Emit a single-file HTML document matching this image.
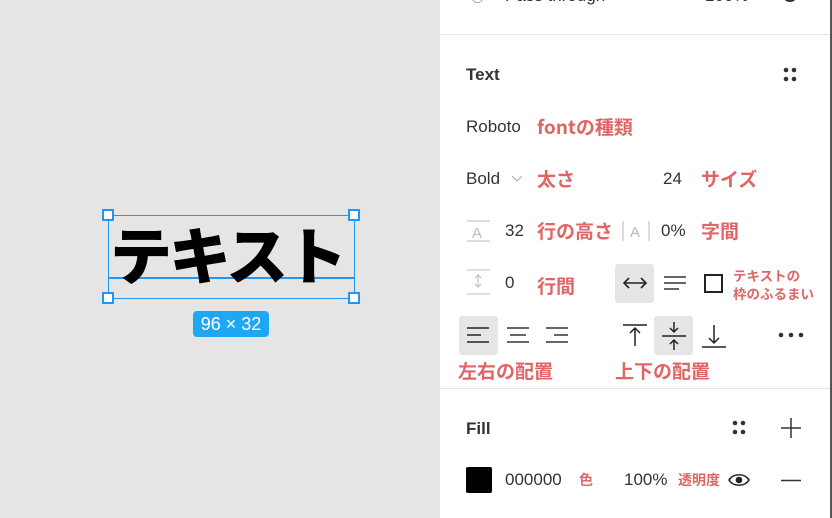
<!DOCTYPE html>
<html><head><meta charset="utf-8"><style>
*{margin:0;padding:0;box-sizing:border-box}
body{width:832px;height:518px;overflow:hidden;background:#e5e5e5;font-family:"Liberation Sans","Noto Sans CJK JP",sans-serif;position:relative}
.a{position:absolute}
.p{left:440px;top:0;width:392px;height:518px;background:#fff}
.t{font-size:17px;color:#333}
.r{color:#e06666;font-weight:bold;font-size:19px;font-family:"Noto Sans CJK JP",sans-serif}
.hl{background:#e6e6e6;border-radius:3px}
.h{position:absolute;width:12px;height:12px;background:#fff;border:2px solid #2196f3}
</style></head><body>
<div class="a p"></div>
<div class="a" style="left:830px;top:0;width:2px;height:518px;background:#555"></div>
<div class="a t" style="left:505px;top:-14px;font-size:17px">Pass through</div>
<div class="a t" style="left:705px;top:-14px">100%</div>
<div class="a" style="left:471px;top:-10px;width:13px;height:13px;border:1.5px solid #aaa;border-radius:50%"></div>
<div class="a" style="left:783px;top:-10px;width:14px;height:12px;border:2px solid #333;border-radius:50%"></div>
<div class="a" style="left:440px;top:34px;width:390px;height:1px;background:#e5e5e5"></div>
<div class="a t" style="left:466px;top:65px;font-weight:bold;font-size:17px">Text</div>
<svg class="a" style="left:782px;top:67px" width="16" height="16"><g fill="#333"><circle cx="4" cy="3" r="2.3"/><circle cx="12" cy="3" r="2.3"/><circle cx="4" cy="12" r="2.3"/><circle cx="12" cy="12" r="2.3"/></g></svg>
<div class="a t" style="left:466px;top:117px">Roboto</div>
<div class="a r" style="left:537px;top:113px">fontの種類</div>
<div class="a t" style="left:466px;top:169px">Bold</div>
<svg class="a" style="left:511px;top:175px" width="12" height="8"><path d="M1 1l5 5 5-5" stroke="#aaa" fill="none"/></svg>
<div class="a r" style="left:537px;top:165px">太さ</div>
<div class="a t" style="left:663px;top:169px">24</div>
<div class="a r" style="left:701px;top:165px">サイズ</div>
<svg class="a" style="left:466px;top:219px" width="24" height="24"><path d="M1 2h23M1 22h23" stroke="#bbb"/><text x="6" y="19" font-size="15" fill="#bbb" font-family="Liberation Sans">A</text></svg>
<div class="a t" style="left:505px;top:221px">32</div>
<div class="a r" style="left:537px;top:217px">行の高さ</div>
<svg class="a" style="left:621px;top:219px" width="30" height="24"><path d="M2 2v20M28 2v20" stroke="#bbb"/><text x="9" y="18" font-size="15" fill="#bbb" font-family="Liberation Sans">A</text></svg>
<div class="a t" style="left:661px;top:221px">0%</div>
<div class="a r" style="left:701px;top:217px">字間</div>
<svg class="a" style="left:466px;top:268px" width="24" height="28"><path d="M1 2h23M1 26h23" stroke="#bbb"/><path d="M12 7v12M9 10l3-3 3 3M9 16l3 3 3-3" stroke="#bbb" fill="none"/></svg>
<div class="a t" style="left:505px;top:273px">0</div>
<div class="a r" style="left:537px;top:272px">行間</div>
<div class="a hl" style="left:615px;top:264px;width:39px;height:39px"></div>
<svg class="a" style="left:622px;top:274px" width="26" height="18"><path d="M2 9h22M7 4l-5 5 5 5M19 4l5 5-5 5" stroke="#222" stroke-width="1.6" fill="none"/></svg>
<svg class="a" style="left:662px;top:274px" width="26" height="18"><path d="M2 3h22M2 9h22M2 15h15" stroke="#333" stroke-width="1.6"/></svg>
<div class="a" style="left:704px;top:274px;width:19px;height:19px;border:2px solid #222"></div>
<div class="a" style="left:733px;top:266px;color:#e06666;font-weight:bold;font-size:13.5px;line-height:18px;font-family:'Noto Sans CJK JP',sans-serif">テキストの<br>枠のふるまい</div>
<div class="a hl" style="left:459px;top:316px;width:39px;height:39px"></div>
<svg class="a" style="left:466px;top:326px" width="26" height="20"><path d="M1 2h22M1 9h14M1 16h22" stroke="#222" stroke-width="1.6"/></svg>
<svg class="a" style="left:506px;top:326px" width="26" height="20"><path d="M1 2h22M4 9h16M1 16h22" stroke="#333" stroke-width="1.4"/></svg>
<svg class="a" style="left:545px;top:326px" width="26" height="20"><path d="M1 2h22M9 9h14M1 16h22" stroke="#333" stroke-width="1.4"/></svg>
<svg class="a" style="left:622px;top:323px" width="26" height="26"><path d="M1 2h24M13 5v18M8 10l5-5 5 5" stroke="#222" stroke-width="1.5" fill="none"/></svg>
<div class="a hl" style="left:654px;top:316px;width:39px;height:39px"></div>
<svg class="a" style="left:660px;top:320px" width="28" height="32"><path d="M2 16h24M14 2v10M10 8l4 4 4-4M14 30v-10M10 24l4-4 4 4" stroke="#222" stroke-width="1.5" fill="none"/></svg>
<svg class="a" style="left:700px;top:323px" width="28" height="26"><path d="M2 24h24M14 2v18M9 15l5 5 5-5" stroke="#222" stroke-width="1.5" fill="none"/></svg>
<svg class="a" style="left:778px;top:330px" width="28" height="10"><g fill="#333"><circle cx="3" cy="5" r="2.3"/><circle cx="13" cy="5" r="2.3"/><circle cx="23" cy="5" r="2.3"/></g></svg>
<div class="a r" style="left:458px;top:357px">左右の配置</div>
<div class="a r" style="left:615px;top:357px">上下の配置</div>
<div class="a" style="left:440px;top:388px;width:390px;height:1px;background:#e5e5e5"></div>
<div class="a t" style="left:466px;top:419px;font-weight:bold">Fill</div>
<svg class="a" style="left:731px;top:420px" width="16" height="16"><g fill="#333"><circle cx="4" cy="3" r="2.3"/><circle cx="12" cy="3" r="2.3"/><circle cx="4" cy="12" r="2.3"/><circle cx="12" cy="12" r="2.3"/></g></svg>
<svg class="a" style="left:781px;top:418px" width="20" height="20"><path d="M10 0v20M0 10h20" stroke="#333" stroke-width="1.5"/></svg>
<div class="a" style="left:466px;top:467px;width:26px;height:26px;background:#000;border-radius:2px"></div>
<div class="a t" style="left:505px;top:470px">000000</div>
<div class="a" style="left:579px;top:470px;color:#e06666;font-weight:bold;font-size:14px;font-family:'Noto Sans CJK JP',sans-serif">色</div>
<div class="a t" style="left:624px;top:470px">100%</div>
<div class="a" style="left:678px;top:470px;color:#e06666;font-weight:bold;font-size:14px;font-family:'Noto Sans CJK JP',sans-serif">透明度</div>
<svg class="a" style="left:728px;top:472px" width="22" height="16"><path d="M1 8C5 1 17 1 21 8C17 15 5 15 1 8Z" stroke="#222" stroke-width="1.6" fill="none"/><circle cx="11" cy="8" r="3.3" fill="#222"/></svg>
<svg class="a" style="left:781px;top:479px" width="20" height="3"><path d="M0 1.5h20" stroke="#333" stroke-width="1.5"/></svg>
<!-- canvas -->
<div class="a" style="left:108px;top:215px;width:247px;height:84px;border:1.5px solid #2196f3"></div>
<div class="a" style="left:108px;top:277px;width:247px;height:1.5px;background:#2196f3"></div>
<div class="a" style="left:110px;top:212px;font-size:62px;font-weight:900;color:#000;font-family:'Noto Sans CJK JP',sans-serif;line-height:80px;letter-spacing:-3px;white-space:nowrap">テキスト</div>
<div class="h" style="left:102px;top:209px"></div>
<div class="h" style="left:348px;top:209px"></div>
<div class="h" style="left:102px;top:292px"></div>
<div class="h" style="left:348px;top:292px"></div>
<div class="a" style="left:193px;top:311px;width:76px;height:26px;background:#1ea7f5;border-radius:4px;color:#fff;font-size:18px;text-align:center;line-height:26px">96 × 32</div>
</body></html>
